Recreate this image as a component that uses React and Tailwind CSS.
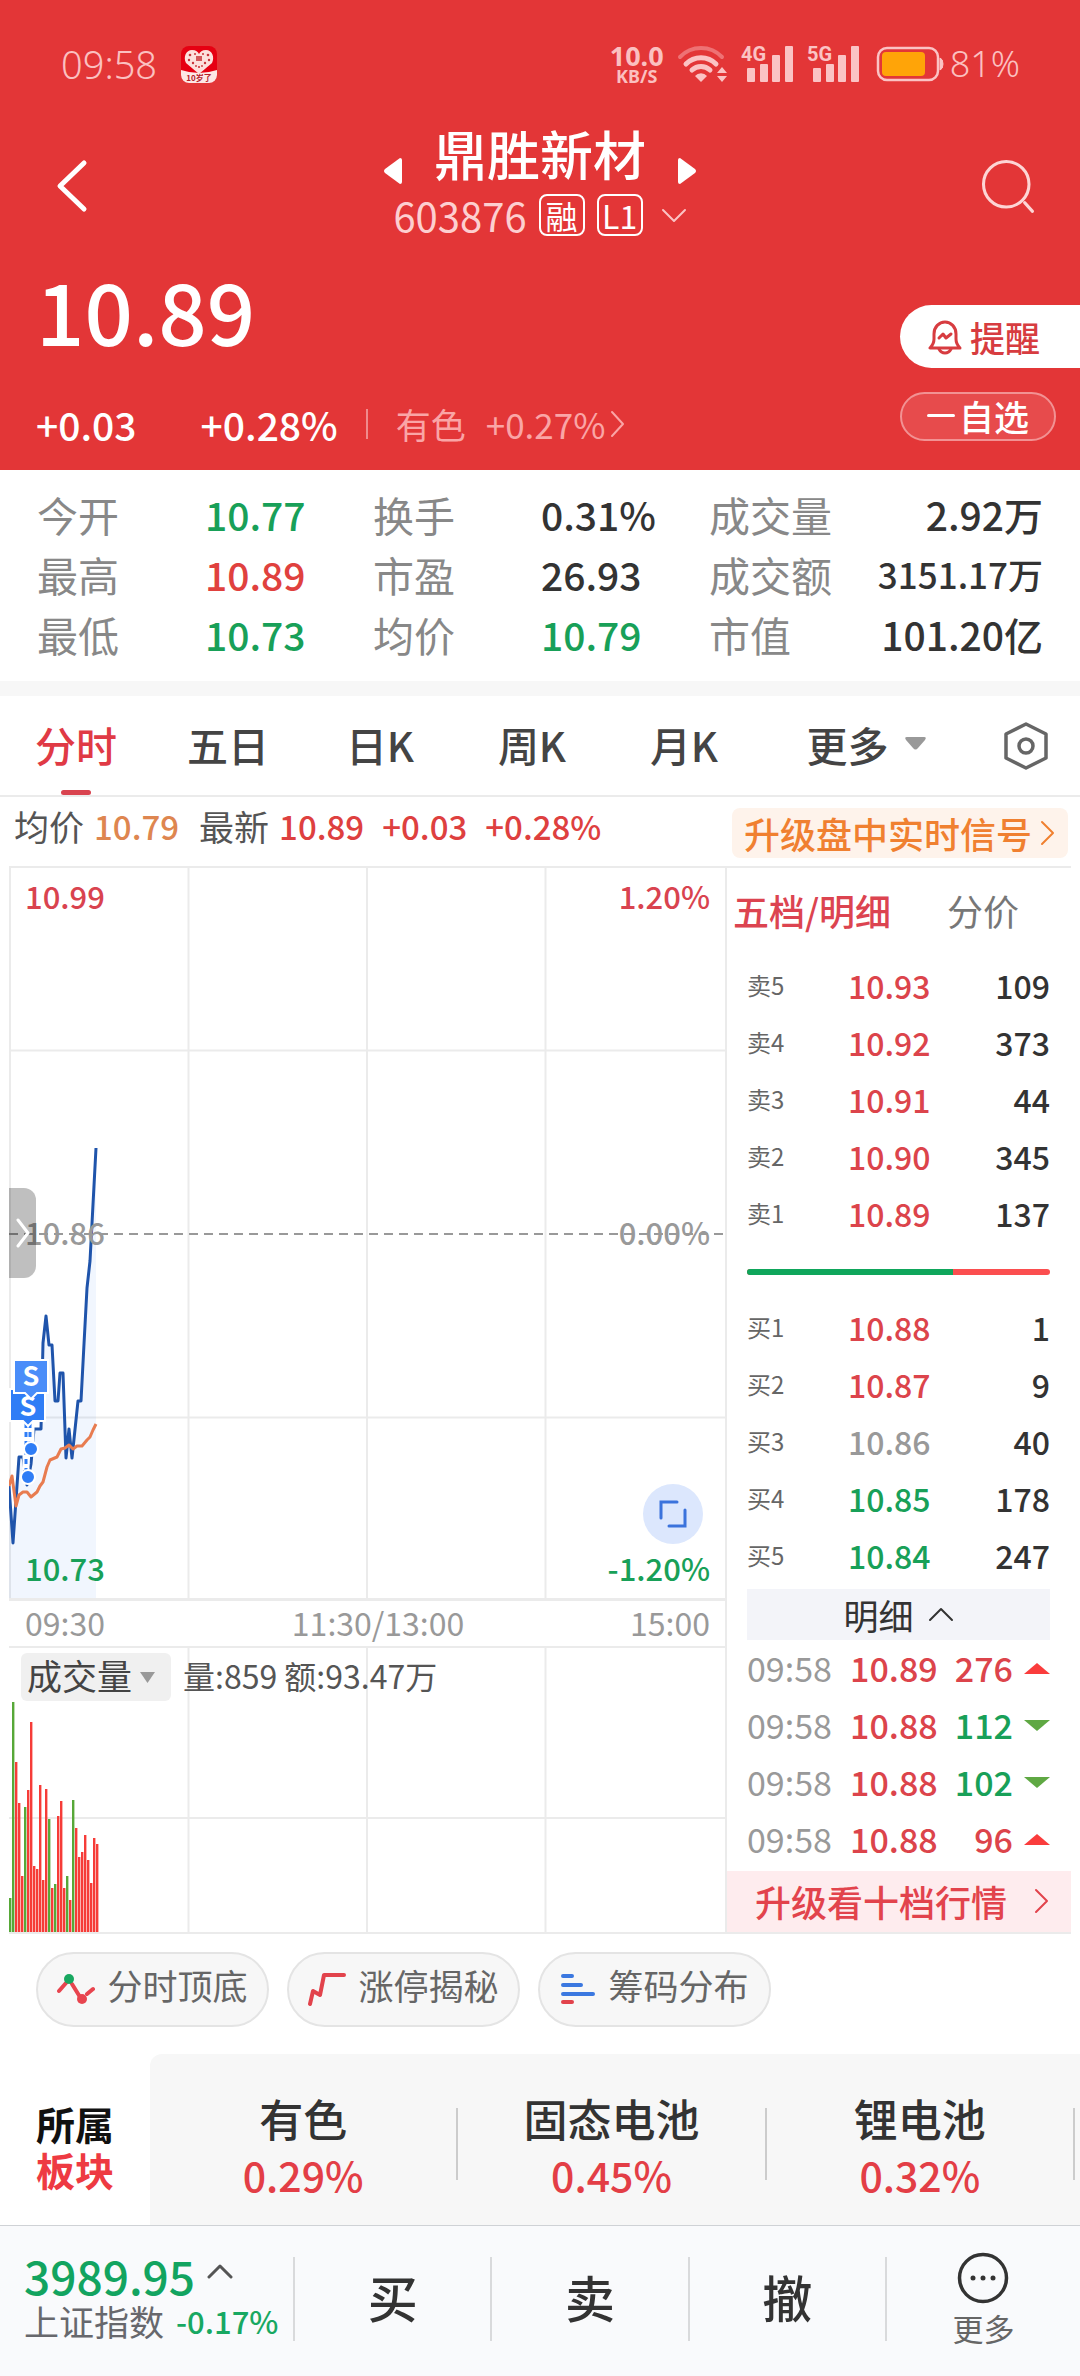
import React from "react";

const STATS = [
  ["今开", "10.77", "text-[#18a058]"],
  ["换手", "0.31%", "text-[#333333]"],
  ["成交量", "2.92万", "text-[#333333]"],
  ["最高", "10.89", "text-[#e0413e]"],
  ["市盈", "26.93", "text-[#333333]"],
  ["成交额", "3151.17万", "text-[#333333]"],
  ["最低", "10.73", "text-[#18a058]"],
  ["均价", "10.79", "text-[#18a058]"],
  ["市值", "101.20亿", "text-[#333333]"],
];

const SELLS = [
  ["卖5", "10.93", "109"],
  ["卖4", "10.92", "373"],
  ["卖3", "10.91", "44"],
  ["卖2", "10.90", "345"],
  ["卖1", "10.89", "137"],
];

const BUYS = [
  ["买1", "10.88", "1", "text-[#dc444b]"],
  ["买2", "10.87", "9", "text-[#dc444b]"],
  ["买3", "10.86", "40", "text-[#999999]"],
  ["买4", "10.85", "178", "text-[#18a058]"],
  ["买5", "10.84", "247", "text-[#18a058]"],
];

const TRADES = [
  ["10.89", "276", true],
  ["10.88", "112", false],
  ["10.88", "102", false],
  ["10.88", "96", true],
];

/* [height, rising] per minute */
const VOLUMES = [
  [34, 0], [230, 0], [170, 1], [129, 1], [56, 1], [125, 0], [142, 1], [210, 1], [66, 1], [63, 1],
  [147, 1], [52, 1], [143, 1], [113, 0], [44, 1], [48, 0], [116, 1], [131, 1], [44, 1], [56, 0],
  [32, 1], [132, 0], [104, 1], [75, 1], [80, 1], [97, 1], [72, 1], [49, 1], [94, 1], [88, 1],
];

const PRICE_LINE =
  "0,618 4,675 10,589 14,589 18,617 22,596 25,561 32,561 34,475 37,448 40,477 43,477 46,533 49,533 51,505 54,505 57,590 60,561 63,590 69,533 72,533 75,476 78,420 81,393 87,280";
const AVG_LINE =
  "0,618 3,608 7,638 10,627 14,624 18,624 22,629 28,624 31,618 34,614 38,599 41,592 48,589 52,581 56,580 60,577 64,581 68,578 73,578 78,572 81,569 84,562 87,556";

function Chevron({ className, d = "M3 2l12 12-12 12", w = 18, h = 28, sw = 2 }) {
  return (
    <svg width={w} height={h} viewBox={`0 0 ${w} ${h}`} className={className} fill="none" stroke="currentColor" strokeWidth={sw} strokeLinecap="round" strokeLinejoin="round" aria-hidden="true">
      <path d={d} />
    </svg>
  );
}

function Signal({ label }) {
  return (
    <svg width="54" height="50" viewBox="0 -6 54 50" fill="#fbc3c4" aria-hidden="true">
      <text x="0" y="16" fontFamily="Roboto, sans-serif" fontWeight="700" fontSize="20">{label}</text>
      <rect x="6" y="23" width="8" height="14" rx="1" />
      <rect x="19" y="19" width="8" height="18" rx="1" />
      <rect x="31" y="10" width="8" height="27" rx="1" />
      <rect x="44" y="1" width="8" height="36" rx="1" />
    </svg>
  );
}

function StatusBar() {
  return (
    <div className="flex h-32 items-center justify-between pl-[61px] pr-[60px] font-['Noto_Sans',sans-serif] text-[#fbc0c0]">
      <div className="flex items-center gap-6">
        <span className="text-[38px] leading-10 font-light">09:58</span>
        <svg width="36" height="37" viewBox="0 0 36 37" aria-hidden="true">
          <defs><clipPath id="appIcon"><rect width="36" height="37" rx="8" /></clipPath></defs>
          <g clipPath="url(#appIcon)">
            <rect width="36" height="37" fill="#e60012" />
            <path d="M0 24q18 6 36 0v13H0z" fill="#fde8e6" />
            <path d="M18 28L5 17C2 11 5 4 11 4c4 0 6 2 7 4 1-2 3-4 7-4 6 0 9 7 6 13z" fill="#fde0dd" />
            <g fill="#c8343a">
              <circle cx="9" cy="9" r="1.3" /><circle cx="14" cy="8" r="1" /><circle cx="22" cy="8" r="1" /><circle cx="27" cy="9" r="1.3" />
              <circle cx="8" cy="14" r="1.2" /><circle cx="12" cy="17" r="1.2" /><circle cx="24" cy="17" r="1.2" /><circle cx="28" cy="14" r="1.2" />
              <circle cx="18" cy="21" r="1.1" /><circle cx="15" cy="20" r="0.9" /><circle cx="21" cy="20" r="0.9" />
              <path d="M15 10h6v5h-6z" opacity=".8" />
            </g>
            <text x="18" y="35" textAnchor="middle" fontSize="8" fontWeight="700" fill="#b3202a" fontFamily="'Noto Sans CJK SC', sans-serif">10岁了</text>
          </g>
        </svg>
      </div>
      <div className="flex items-center">
        <div className="flex flex-col items-center font-bold">
          <span className="text-[27px] leading-6">10.0</span>
          <span className="text-[18px] leading-4">KB/S</span>
        </div>
        <svg width="52" height="38" viewBox="0 0 52 38" className="ml-[13px]" fill="none" strokeLinecap="round" aria-hidden="true">
          <path d="M3 12a29 29 0 0 1 42 0" stroke="#ee7274" strokeWidth="4" />
          <path d="M9 19a21 21 0 0 1 30 0" stroke="#fbc3c4" strokeWidth="5" />
          <path d="M15 25a13 13 0 0 1 18 0" stroke="#fbc3c4" strokeWidth="5" />
          <path d="M18 31a8 8 0 0 1 12 0l-6 6z" fill="#fbc3c4" />
          <path d="M45 22l5 6H40zM45 37l5-6H40z" fill="#fbc3c4" />
        </svg>
        <div className="ml-3 flex gap-3">
          <Signal label="4G" />
          <Signal label="5G" />
        </div>
        <svg width="68" height="36" viewBox="0 0 68 36" className="ml-[15px]" aria-hidden="true">
          <rect x="2" y="2" width="60" height="32" rx="9" fill="none" stroke="#fbc3c4" strokeWidth="2.5" />
          <path d="M64 12q3 1 3 6t-3 6z" fill="#fbc3c4" stroke="#fbc3c4" />
          <rect x="6" y="6" width="43" height="24" rx="4" fill="#ffa408" />
        </svg>
        <span className="ml-1.5 text-[36px] leading-10 font-light">81%</span>
      </div>
    </div>
  );
}

function Header() {
  return (
    <header className="bg-[#e33637] text-white">
      <StatusBar />
      <div className="flex h-[112px] justify-between px-[44px]">
        <button aria-label="返回" className="flex h-[116px] w-14 items-center justify-center">
          <Chevron d="M28 4L4 27l24 23" w={32} h={54} sw={5} />
        </button>
        <div className="-mt-1.5 flex flex-col items-center">
          <div className="flex items-center gap-8">
            <button aria-label="上一只" className="pt-9"><svg width="18" height="26" viewBox="0 0 18 26" fill="currentColor"><path d="M16 0q2 0 2 2v22q0 2-2 2L1 15q-2-2 0-4z" /></svg></button>
            <h1 className="text-[53px] leading-[52px] font-medium">鼎胜新材</h1>
            <button aria-label="下一只" className="pt-9"><svg width="18" height="26" viewBox="0 0 18 26" fill="currentColor"><path d="M2 0Q0 0 0 2v22q0 2 2 2l15-11q2-2 0-4z" /></svg></button>
          </div>
          <div className="mt-2.5 flex items-center gap-3">
            <span className="text-[40px] leading-[42px] text-[#fdcfd0]">603876</span>
            <span className="flex h-[42px] w-[46px] items-center justify-center rounded-lg border-2 border-white text-[32px] leading-8">融</span>
            <span className="flex h-[42px] w-[46px] items-center justify-center rounded-lg border-2 border-white text-[32px] leading-8">L1</span>
            <Chevron className="ml-1.5 text-[#fbc3c4]" d="M2 3l11 11L24 3" w={26} h={17} />
          </div>
        </div>
        <button aria-label="搜索" className="flex h-[116px] w-14 items-center justify-end">
          <svg width="64" height="64" viewBox="0 0 64 64" fill="none" stroke="#fdd5d5" strokeWidth="3.5" strokeLinecap="round"><circle cx="30" cy="30" r="26" /><path d="M51 51l9 10" /></svg>
        </button>
      </div>
      <div className="flex h-[230px] justify-between pl-9">
        <div className="flex flex-col">
          <div className="mt-5 text-[85px] leading-[98px] font-medium">10.89</div>
          <div className="mt-11 flex items-center text-[39px] leading-[44px] font-medium">
            <span>+0.03</span>
            <span className="ml-16">+0.28%</span>
            <span className="ml-7 h-[30px] w-0.5 bg-[#f08b8c]" />
            <a href="#sector" className="ml-7 flex items-center text-[35px] leading-[44px] font-normal text-[#faa5a6]">
              有色<span className="ml-5">+0.27%</span>
              <Chevron className="ml-1" d="M3 2l11 12L3 26" />
            </a>
          </div>
        </div>
        <div className="flex w-[180px] flex-col pt-[65px]">
          <button className="flex h-[63px] items-center gap-2 rounded-l-full bg-white pl-7 text-[35px] leading-10 font-medium text-[#d73c40]">
            <svg width="34" height="36" viewBox="0 0 34 36" fill="none" stroke="currentColor" strokeWidth="3" strokeLinecap="round" strokeLinejoin="round">
              <path d="M2 29h30c-3-3-4-5-4-9v-5C28 8 23 3 17 3S6 8 6 15v5c0 4-1 6-4 9z" />
              <path d="M11 30q2 4 6 4t6-4" />
              <path d="M11 19l4-4 3 4 5-4" />
            </svg>
            提醒
          </button>
          <button className="mt-6 flex h-[49px] w-[156px] items-center justify-center gap-1 rounded-full border-2 border-[#f29293] bg-[#e74b4c] pb-0.5 text-[35px] leading-9 font-medium">
            <span className="h-[3px] w-7 rounded bg-white" />自选
          </button>
        </div>
      </div>
    </header>
  );
}

function Stats() {
  return (
    <dl className="grid h-[211px] grid-cols-[336fr_336fr_334fr] content-start pt-3.5 pr-[37px] pl-[37px] text-[41px] leading-[60px]">
      {STATS.map(([k, v, c], i) => (
        <div key={k} className={i % 3 === 2 ? "flex justify-between" : "grid grid-cols-2"}>
          <dt className="text-[#888888]">{k}</dt>
          <dd className={c + (v.length > 7 ? " text-[35px]" : " text-[39px]") + " font-medium"}>{v}</dd>
        </div>
      ))}
    </dl>
  );
}

function Tabs() {
  return (
    <nav className="grid h-[101px] grid-cols-[152fr_152fr_152fr_152fr_152fr_212fr_108fr] border-b-2 border-[#ebebeb] text-[41px] leading-[44px] text-[#444444]">
      <button className="relative pb-1 font-medium text-[#e03a45]">
        分时
        <span className="absolute bottom-0 left-1/2 h-[5px] w-[30px] -translate-x-1/2 rounded-full bg-[#d9434f]" />
      </button>
      <button className="pb-1 font-medium">五日</button>
      <button className="pb-1 font-medium">日K</button>
      <button className="pb-1 font-medium">周K</button>
      <button className="pb-1 font-medium">月K</button>
      <button className="flex items-center justify-center gap-4 pb-1 font-medium">
        更多
        <svg width="21" height="13" viewBox="0 0 21 13" fill="#999999"><path d="M2 0h17q3 0 1 3l-7 8q-2.500 3-5 0L1 3Q-1 0 2 0z" /></svg>
      </button>
      <button aria-label="设置" className="flex items-center justify-center">
        <svg width="44" height="48" viewBox="0 0 44 48" fill="none" stroke="#666666" strokeWidth="3.500" strokeLinejoin="round"><path d="M22 2l20 10v24L22 46 2 36V12z" /><circle cx="22" cy="24" r="7" /></svg>
      </button>
    </nav>
  );
}

function InfoRow() {
  return (
    <div className="flex h-[69px] items-end justify-between pr-3 pb-2 pl-3.5 text-[35px] leading-10">
      <div className="flex items-center pb-3 font-medium">
        <span className="font-normal text-[#555555]">均价</span>
        <span className="ml-2.5 text-[33px] text-[#de8650]">10.79</span>
        <span className="ml-5 font-normal text-[#555555]">最新</span>
        <span className="ml-2.5 text-[33px] text-[#de403f]">10.89</span>
        <span className="ml-[18px] text-[33px] text-[#de403f]">+0.03</span>
        <span className="ml-[18px] text-[33px] text-[#de403f]">+0.28%</span>
      </div>
      <button className="flex h-[50px] items-center gap-2 rounded-lg bg-[#fef3eb] px-3 text-[36px] leading-10 font-medium text-[#f08030]">
        升级盘中实时信号
        <Chevron d="M2 2l11 11L2 24" w={16} h={26} />
      </button>
    </div>
  );
}

function PriceChart() {
  return (
    <div className="relative h-[733px] border-b-[3px] border-[#ebebeb] text-[31px] leading-9 font-medium">
      <svg viewBox="0 0 716 730" preserveAspectRatio="none" className="block h-full w-full" role="img" aria-label="分时走势">
        <path d="M1 0V730M179.500 0V730M358 0V730M536.500 0V730M0 182.500H716M0 549.500H716" stroke="#ebebeb" strokeWidth="2" />
        <polygon points={`${PRICE_LINE} 87,730 0,730`} fill="#3b82f6" fillOpacity="0.07" />
        <path d="M0 366H716" stroke="#999999" strokeWidth="2" strokeDasharray="9 6" />
        <polyline points={PRICE_LINE} fill="none" stroke="#1f54ab" strokeWidth="3" strokeLinejoin="round" />
        <polyline points={AVG_LINE} fill="none" stroke="#e87c50" strokeWidth="3" strokeLinejoin="round" />
        <path d="M17 555V602M22 555V575" stroke="#ffffff" strokeWidth="7" />
        <path d="M17 555V612M21 555V575" stroke="#2f7df6" strokeWidth="3" strokeDasharray="5 4" />
        <circle cx="22" cy="581" r="7" fill="#2f7df6" stroke="#ffffff" strokeWidth="2" />
        <circle cx="19" cy="609" r="7" fill="#2f7df6" stroke="#ffffff" strokeWidth="2" />
        <path d="M1 521H36V553H24l-5 5-5-5H1z" fill="#2f7df6" stroke="#ffffff" strokeWidth="2" />
        <text x="19" y="548" textAnchor="middle" fontSize="27" fontWeight="700" fill="#ffffff">S</text>
        <path d="M5 492H39V525H28l-6 6-6-6H5z" fill="#4a8df9" stroke="#ffffff" strokeWidth="2" />
        <text x="22" y="518" textAnchor="middle" fontSize="27" fontWeight="700" fill="#ffffff">S</text>
      </svg>
      <div className="absolute inset-0 flex flex-col justify-between pt-2.5 pr-[15px] pb-3 pl-4">
        <div className="flex justify-between text-[#d9434f]"><span>10.99</span><span>1.20%</span></div>
        <div className="flex justify-between text-[#999999]"><span>10.86</span><span>0.00%</span></div>
        <div className="flex justify-between text-[#18a058]"><span>10.73</span><span>-1.20%</span></div>
      </div>
      <button aria-label="展开" className="absolute top-[320px] left-0 flex h-[90px] w-[27px] items-center justify-center rounded-r-xl bg-black/25 text-white">
        <Chevron d="M2 2l10 13L2 28" w={14} h={30} sw={3} />
      </button>
      <button aria-label="全屏" className="absolute right-[22px] bottom-[54px] flex size-[60px] items-center justify-center rounded-full bg-[#dce7fd]">
        <svg width="28" height="28" viewBox="0 0 28 28" fill="none" stroke="#3b73dc" strokeWidth="3" strokeLinecap="round"><path d="M2 18V2h16M26 10v16H10" /></svg>
      </button>
    </div>
  );
}

function VolumeChart() {
  return (
    <div className="relative h-[288px] border-t-2 border-b-2 border-[#ebebeb]">
      <svg viewBox="0 0 716 284" preserveAspectRatio="none" className="block h-full w-full" role="img" aria-label="成交量">
        <path d="M179.500 0V284M358 0V284M536.500 0V284M0 170H716" stroke="#ebebeb" strokeWidth="2" />
        {VOLUMES.map(([h, up], i) => (
          <rect key={i} x={i * 3} y={284 - h} width="2.400" height={h} fill={up ? "#f63c38" : "#57a838"} />
        ))}
      </svg>
      <div className="absolute top-[5px] left-3 flex items-center gap-3 text-[32px] leading-9 text-[#555555]">
        <button className="flex h-[48px] w-[150px] items-center gap-2 rounded-md bg-[#f0f0f0] pb-1 pl-1.5 text-[35px] leading-9 text-[#444444]">
          成交量
          <svg width="15" height="11" viewBox="0 0 15 11" className="mt-1" fill="#999999"><path d="M0 0h15L7.500 11z" /></svg>
        </button>
        <span className="pb-1">量:859 额:93.47万</span>
      </div>
    </div>
  );
}

function Quote({ label, price, qty, color }) {
  return (
    <tr className="h-[57px]">
      <th scope="row" className="w-[101px] pb-[3px] text-left text-[24px] font-normal text-[#666666]">{label}</th>
      <td className={"pb-[3px] text-left text-[32px] font-medium " + color}>{price}</td>
      <td className="pb-[3px] text-right text-[32px] font-medium text-[#333333]">{qty}</td>
    </tr>
  );
}

function OrderBook() {
  return (
    <aside className="flex flex-col border-l-2 border-[#ebebeb]">
      <div className="flex h-[90px] items-center gap-14 pb-1.5 pl-1.5 text-[36px] leading-10">
        <button className="font-medium text-[#dc4450]">五档/明细</button>
        <button className="text-[#777777]">分价</button>
      </div>
      <div className="pr-[21px] pl-5">
        <table className="w-full border-collapse leading-10"><tbody>
          {SELLS.map(([l, p, q]) => <Quote key={l} label={l} price={p} qty={q} color="text-[#dc444b]" />)}
        </tbody></table>
        <div className="flex h-[57px] items-center">
          <div className="flex h-1.5 w-full overflow-hidden rounded-full bg-[#fb4e4f]"><div className="w-[68%] bg-[#0fa65b]" /></div>
        </div>
        <table className="w-full border-collapse leading-10"><tbody>
          {BUYS.map(([l, p, q, c]) => <Quote key={l} label={l} price={p} qty={q} color={c} />)}
        </tbody></table>
        <button className="mt-1 flex h-[51px] w-full items-center justify-center gap-3.5 bg-[#f3f4f9] text-[35px] leading-10 text-[#333333]">
          明细
          <Chevron d="M2 13L13 2l11 11" w={26} h={15} />
        </button>
        <table className="w-full border-collapse text-[34px] leading-10"><tbody>
          {TRADES.map(([p, q, up], i) => (
            <tr key={i} className="h-[57px]">
              <td className="w-[103px] pb-0.5 text-[#999999]">09:58</td>
              <td className="pb-0.5 font-medium text-[#dc444b]">{p}</td>
              <td className={(up ? "text-[#dc444b]" : "text-[#18a058]") + " pb-0.5 text-right font-medium"}>{q}</td>
              <td className="w-[37px]">
                <svg width="26" height="13" viewBox="0 0 26 13" className="ml-auto" fill={up ? "#fa3c3c" : "#5fa843"}><path d={up ? "M0 12L13 1l13 11z" : "M0 1h26L13 12z"} /></svg>
              </td>
            </tr>
          ))}
        </tbody></table>
      </div>
      <button className="mt-auto flex h-[63px] items-center justify-between border-b-2 border-[#ebebeb] bg-[#feecee] pr-[21px] pb-0.5 pl-7 text-[36px] leading-10 font-medium text-[#e2434c]">
        升级看十档行情
        <Chevron d="M3 2l11 11L3 24" w={17} h={26} />
      </button>
    </aside>
  );
}

function Chips() {
  const cls = "flex h-[75px] w-[233px] items-center justify-center gap-3 rounded-full border-2 border-[#e4e4e4] bg-[#f7f7f7] pb-2.5 text-[35px] leading-10 text-[#666666]";
  return (
    <div className="flex gap-[18px] px-9 pt-[18px] pb-[27px]">
      <button className={cls}>
        <svg width="38" height="32" viewBox="0 0 38 32" className="mt-2" fill="none" stroke="#e8454f" strokeWidth="4" strokeLinecap="round"><path d="M2 18L9 10M15 11l8 13M30 21l6-5" /><circle cx="12" cy="6" r="5" fill="#18a860" stroke="none" /><circle cx="25" cy="26" r="5" fill="#e8454f" stroke="none" /></svg>
        分时顶底
      </button>
      <button className={cls}>
        <svg width="38" height="34" viewBox="0 0 38 34" className="mt-2" fill="none" stroke="#e2434c" strokeWidth="4" strokeLinecap="round" strokeLinejoin="round"><path d="M2 32l3-13 7 4 4-20h20" /></svg>
        涨停揭秘
      </button>
      <button className={cls}>
        <svg width="36" height="32" viewBox="0 0 36 32" className="mt-2" fill="none" stroke="#3b78e0" strokeWidth="4" strokeLinecap="round"><path d="M3 3h9M3 12h18M3 21h30" /><path d="M3 29h9" stroke="#e2434c" /></svg>
        筹码分布
      </button>
    </div>
  );
}

function Sectors() {
  return (
    <section id="sector" className="flex h-[171px]">
      <h2 className="flex w-[150px] flex-col items-center justify-center pt-3 text-[39px] leading-[46px] font-bold text-[#111111]">
        <span>所属</span><span className="text-[#ee3a42]">板块</span>
      </h2>
      <div className="flex flex-1 rounded-tl-xl bg-[#f7f7f7] pr-[5px] font-medium">
        {[["有色", "0.29%"], ["固态电池", "0.45%"], ["锂电池", "0.32%"]].map(([n, v]) => (
          <a key={n} href={"#" + n} className="flex flex-1 items-center">
            <span className="flex flex-1 flex-col items-center pt-2.5">
              <span className="text-[44px] leading-[58px] text-[#333333]">{n}</span>
              <span className="text-[41px] leading-[54px] text-[#e33e46]">{v}</span>
            </span>
            <span className="mt-2 h-[72px] w-0.5 bg-[#cccccc]" />
          </a>
        ))}
      </div>
    </section>
  );
}

function BottomBar() {
  return (
    <footer className="flex h-[151px] border-t border-[#cfd2d6] bg-[#f9fafc]">
      <button className="flex w-[293px] flex-col items-start justify-center pb-3 pl-6 text-left">
        <span className="flex items-center gap-3 text-[46px] leading-[52px] font-medium text-[#12a460]">
          3989.95
          <Chevron className="mb-2 text-[#555555]" d="M2 13L13 2l11 11" w={26} h={15} sw={3} />
        </span>
        <span className="flex items-center gap-3 text-[35px] leading-[40px] text-[#67686d]">
          上证指数<span className="text-[31px] font-medium text-[#18a862]">-0.17%</span>
        </span>
      </button>
      <div className="flex flex-1 items-center pb-1 text-[50px] leading-[56px] font-medium text-[#333333]">
        {["买", "卖", "撤"].map((t) => (
          <button key={t} className="flex h-[84px] flex-1 items-center justify-center border-l-2 border-[#d9dadc] pb-1.5">{t}</button>
        ))}
        <button className="flex h-[84px] w-[195px] flex-col items-center justify-center gap-1.5 border-l-2 border-[#d9dadc] text-[31px] leading-9 font-normal text-[#666666]">
          <svg width="52" height="52" viewBox="0 0 52 52" className="shrink-0" fill="none" stroke="#333333" strokeWidth="3.500"><circle cx="26" cy="26" r="23.500" /><g fill="#333333" stroke="none"><circle cx="16" cy="26" r="2.500" /><circle cx="26" cy="26" r="2.500" /><circle cx="36" cy="26" r="2.500" /></g></svg>
          更多
        </button>
      </div>
    </footer>
  );
}

export default function App() {
  return (
    <div className="flex min-h-screen flex-col bg-white font-['Noto_Sans_CJK_SC',sans-serif]">
      <Header />
      <Stats />
      <div className="h-[15px] bg-[#f7f7f7]" />
      <Tabs />
      <InfoRow />
      <div className="mx-[9px] grid grid-cols-[716fr_346fr] border-t-2 border-[#ebebeb]">
        <div className="flex flex-col">
          <PriceChart />
          <div className="grid h-[45px] grid-cols-[265fr_auto_244fr] items-center pr-[15px] pb-1 pl-4 text-[32px] leading-9 text-[#999999]">
            <span>09:30</span><span>11:30/13:00</span><span className="text-right">15:00</span>
          </div>
          <VolumeChart />
        </div>
        <OrderBook />
      </div>
      <Chips />
      <Sectors />
      <BottomBar />
    </div>
  );
}
